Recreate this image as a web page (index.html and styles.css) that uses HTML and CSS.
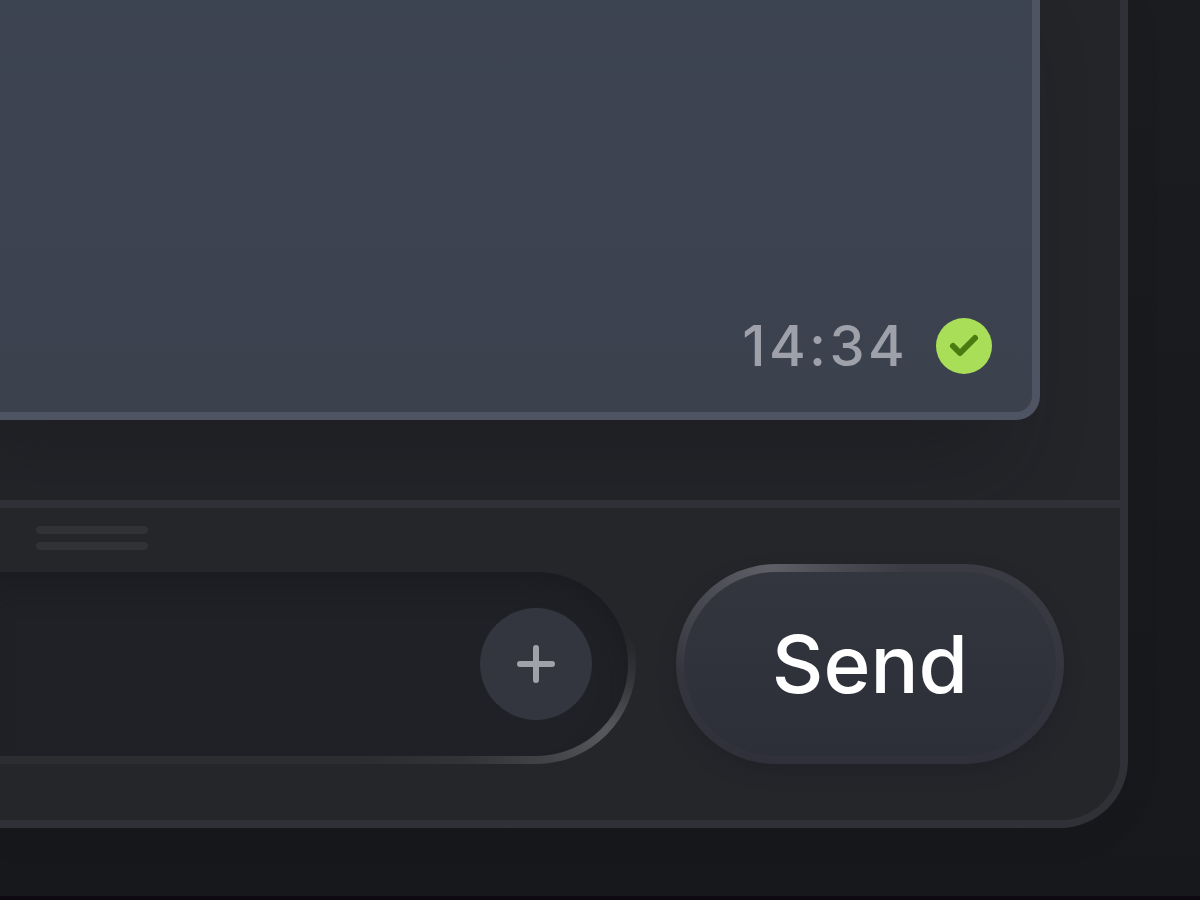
FILE: index.html
```html
<!DOCTYPE html>
<html lang="en">
<head>
    <meta charset="UTF-8">
    <meta name="viewport" content="width=device-width, initial-scale=1.0">
    <title>Chat</title>
    <link rel="stylesheet" href="styles.css">
</head>
<body>
    <main class="chat-window">
        <section class="messages">
            <article class="message">
                <footer class="message-meta">
                    <time datetime="14:34">14:34</time>
                    <svg class="status" viewBox="0 0 56 56" role="img" aria-label="Delivered">
                        <circle cx="28" cy="28" r="28" fill="#a8de58"/>
                        <path d="M17 28l7 7L39 20" fill="none" stroke="#4a7a10" stroke-width="6" stroke-linecap="round" stroke-linejoin="round"/>
                    </svg>
                </footer>
            </article>
        </section>

        <form class="composer">
            <div class="grip"><span></span><span></span></div>
            <div class="composer-row">
                <div class="field">
                    <input type="text" class="field-input" aria-label="Message">
                    <button type="button" class="attach" aria-label="Add attachment">
                        <svg viewBox="0 0 40 40" aria-hidden="true">
                            <path d="M20 4v32M4 20h32" fill="none" stroke="#a1a1aa" stroke-width="6" stroke-linecap="round"/>
                        </svg>
                    </button>
                </div>
                <button type="button" class="send">Send</button>
            </div>
        </form>
    </main>
</body>
</html>
```

FILE: styles.css
```css
* {
    box-sizing: border-box;
}
body {
    margin: 0;
    min-height: 100vh;
    display: flex;
    padding: 0 72px 68px 0;
    border-bottom: 4px solid #0e0a12;
    background: linear-gradient(#1b1c20, #17181c);
    font-family: Inter, "Liberation Sans", sans-serif;
    font-weight: 500;
}
.chat-window {
    flex: 1;
    display: flex;
    flex-direction: column;
    overflow: hidden;
    border: 8px solid #303136;
    border-width: 0 8px 8px 0;
    border-bottom-right-radius: 68px;
    background: #242529;
    box-shadow: 0 8px 40px rgba(0, 0, 0, 0.06);
}

/* Messages */
.messages {
    flex: 1;
    display: flex;
    padding: 0 80px 80px 0;
    overflow: hidden;
}
.message {
    flex: 1;
    display: flex;
    align-items: flex-end;
    justify-content: flex-end;
    padding: 0 40px 38px 0;
    border: 8px solid #4f5462;
    border-width: 0 8px 8px 0;
    border-bottom-right-radius: 24px;
    background: linear-gradient(#3d4451, #3c414e);
    box-shadow: -40px 40px 80px rgba(22, 22, 28, 0.4);
}
.message-meta {
    display: flex;
    align-items: center;
    gap: 28px;
    color: #9ea1aa;
    font-size: 56px;
    line-height: 56px;
    letter-spacing: 0.06em;
}
.status {
    width: 56px;
    height: 56px;
}

/* Composer */
.composer {
    border-top: 8px solid #303136;
    padding: 0 56px 56px 0;
    background: #25262a;
}
.grip {
    display: flex;
    flex-direction: column;
    gap: 8px;
    height: 56px;
    padding: 18px 0 0 36px;
}
.grip span {
    width: 112px;
    height: 8px;
    border-radius: 4px;
    background: #313236;
}
.composer-row {
    display: flex;
    gap: 40px;
    height: 200px;
}
.field {
    flex: 1;
    min-width: 0;
    display: flex;
    align-items: center;
    padding-right: 36px;
    border: 8px solid transparent;
    border-left: 0;
    border-radius: 0 100px 100px 0;
    background:
        linear-gradient(#202126, #202126) padding-box,
        linear-gradient(#25262a 35%, rgba(37, 38, 42, 0) 80%) border-box,
        radial-gradient(circle 240px at calc(100% - 32px) calc(100% - 32px), #57585c, #434448 25%, #323337 60%, #2c2d31) border-box;
    box-shadow: inset -8px 24px 32px -16px rgba(20, 20, 26, 0.5);
}
.field-input {
    flex: 1;
    min-width: 0;
    height: 112px;
    padding: 0 40px;
    border: 0;
    outline: none;
    background: transparent;
    color: #fff;
    font: inherit;
    font-size: 80px;
}
.attach {
    display: flex;
    align-items: center;
    justify-content: center;
    width: 112px;
    height: 112px;
    padding: 0;
    border: 0;
    border-radius: 50%;
    background: #34363f;
    cursor: pointer;
}
.attach svg {
    width: 40px;
    height: 40px;
}
.send {
    padding: 0 88px;
    border: 8px solid transparent;
    border-radius: 100px;
    background:
        linear-gradient(#34363f, #2d2f38) padding-box,
        radial-gradient(circle 140px at 92px 0, #5f5f67, #4a4a52 50%, rgba(56, 55, 64, 0)) border-box,
        linear-gradient(#3b3b44, #30303a) border-box;
    box-shadow: 0 8px 16px rgba(30, 30, 38, 0.5);
    color: #fff;
    font: inherit;
    font-size: 80px;
    line-height: 96px;
    cursor: pointer;
}
```
